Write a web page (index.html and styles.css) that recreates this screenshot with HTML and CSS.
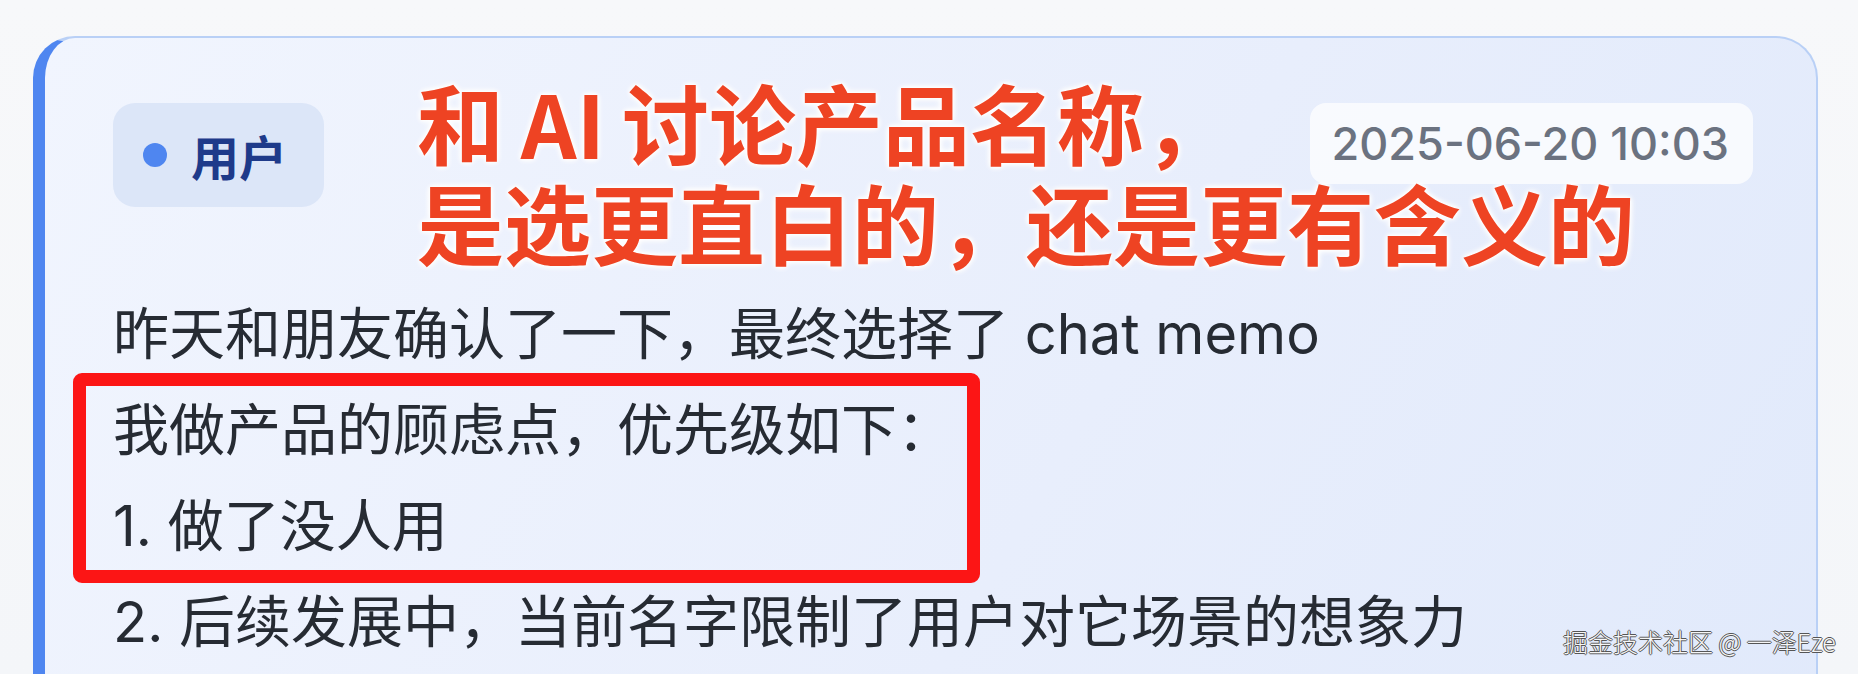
FILE: index.html
```html
<!DOCTYPE html>
<html lang="zh-CN">
<head>
<meta charset="utf-8">
<title>chat memo</title>
<link rel="stylesheet" href="styles.css">
</head>
<body>
<div class="page">
  <div class="card">
    <div class="header">
      <div class="badge"><span class="dot"></span><span class="role">用户</span></div>
      <div class="time">2025-06-20 10:03</div>
    </div>
    <div class="content">
      <p class="line">昨天和朋友确认了一下，最终选择了 chat memo</p>
      <p class="line">我做产品的顾虑点，优先级如下：</p>
      <p class="line">1. 做了没人用</p>
      <p class="line">2. 后续发展中，当前名字限制了用户对它场景的想象力</p>
    </div>
  </div>
  <div class="highlight"></div>
  <div class="caption">和 AI 讨论产品名称，<br>是选更直白的，还是更有含义的</div>
  <div class="watermark">掘金技术社区 @ 一泽Eze</div>
</div>
</body>
</html>
```
FILE: styles.css
```css
html, body {
  margin: 0;
  padding: 0;
}
body {
  width: 1858px;
  height: 674px;
  overflow: hidden;
  background: linear-gradient(180deg, #f7f8fa 0%, #f4f6f9 100%);
  font-family: "Inter", "Noto Sans CJK SC", sans-serif;
}
.page {
  position: relative;
  width: 1858px;
  height: 674px;
  padding: 36px 0 0 33px;
  box-sizing: border-box;
}
.card {
  width: 1785px;
  height: 900px;
  box-sizing: border-box;
  border: 2px solid #b9d0f6;
  border-left: 12px solid #4f86f0;
  border-radius: 42px;
  background: linear-gradient(120deg, #f1f5fe 0%, #e8eefc 55%, #e0e9fb 100%);
  padding: 65px 63px 0 68px;
}
.header {
  display: flex;
  justify-content: space-between;
  align-items: flex-start;
}
.badge {
  display: flex;
  align-items: center;
  gap: 24px;
  height: 104px;
  box-sizing: border-box;
  padding: 0 37px 0 30px;
  border-radius: 22px;
  background: #dce6f8;
}
.dot {
  width: 24px;
  height: 24px;
  border-radius: 50%;
  background: #4f86f0;
}
.role {
  font-family: "Noto Sans CJK SC", sans-serif;
  font-weight: 700;
  font-size: 48px;
  line-height: 1;
  color: #1e3a8a;
}
.time {
  display: flex;
  align-items: center;
  height: 81px;
  box-sizing: border-box;
  padding: 0 24px 0 22px;
  border-radius: 16px;
  background: rgba(255, 255, 255, 0.72);
  font-family: "Inter", sans-serif;
  font-weight: 500;
  font-size: 45px;
  color: #6b7280;
}
.content {
  margin-top: 79px;
}
.line {
  margin: 0;
  font-size: 56px;
  line-height: 96px;
  color: #262b33;
  white-space: nowrap;
}
.highlight {
  position: absolute;
  left: 73px;
  top: 373px;
  width: 907px;
  height: 210px;
  box-sizing: border-box;
  border: 13px solid #fc1515;
  border-radius: 9px;
}
.caption {
  position: absolute;
  left: 417px;
  top: 71px;
  font-family: "Noto Sans CJK SC", sans-serif;
  font-weight: 700;
  font-size: 87px;
  line-height: 100px;
  word-spacing: -3px;
  color: #ee4323;
  white-space: nowrap;
  text-shadow: 0 0 3px #fff, 0 0 5px #fff, 0 0 7px #fff, 0 0 7px #fff;
}
.watermark {
  position: absolute;
  left: 1563px;
  top: 624px;
  font-family: "Noto Sans CJK SC", sans-serif;
  font-weight: 300;
  font-size: 25px;
  line-height: 34px;
  color: #f6f6f6;
  white-space: nowrap;
  text-shadow: 1px 0 0 #555, -1px 0 0 #555, 0 1px 0 #555, 0 -1px 0 #555;
}
```
